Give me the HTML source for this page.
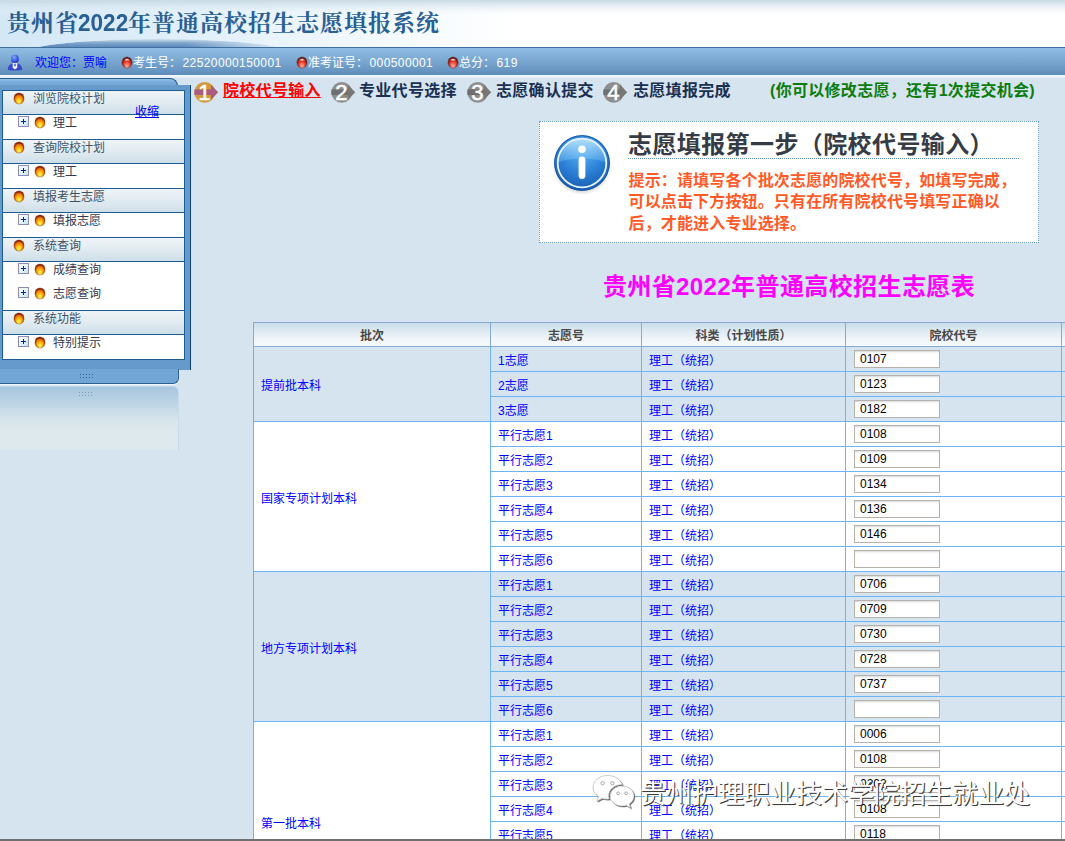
<!DOCTYPE html>
<html lang="zh-CN">
<head>
<meta charset="utf-8">
<title>贵州省2022年普通高校招生志愿填报系统</title>
<style>
*{box-sizing:border-box;margin:0;padding:0}
html,body{width:1065px;height:841px;overflow:hidden}
body{position:relative;background:#d6e4f0;font-family:"Liberation Sans","Noto Sans CJK SC",sans-serif;font-size:12px;color:#333}
.abs{position:absolute}
/* header */
#hdr{left:0;top:0;width:1065px;height:47px;background:linear-gradient(to bottom,rgba(198,217,228,.95) 0,rgba(214,229,238,.6) 6px,rgba(240,246,250,.25) 12px,rgba(255,255,255,0) 16px),linear-gradient(to right,#d3e7f5 0,#e0effa 180px,#f3f9fd 380px,#fff 520px);overflow:hidden}
#hdr .arc{position:absolute;left:22px;top:38.500px;width:272px;height:30px;border-radius:50%;background:linear-gradient(to bottom,#d3e0eb 0,#b3c9de 1.500px,#86aace 3.500px,#6b95c3 6px,#5a88b8 9px);-webkit-mask-image:linear-gradient(to right,#000 0,#000 60%,rgba(0,0,0,.25) 88%,transparent 100%);mask-image:linear-gradient(to right,#000 0,#000 60%,rgba(0,0,0,.25) 88%,transparent 100%)}
#title{left:7px;top:5px;height:36px;line-height:36px;font-family:"Liberation Serif","Noto Serif CJK SC",serif;font-weight:700;font-size:23px;letter-spacing:1px;color:#2a5f94;white-space:nowrap}
#title .d{display:inline-block;width:50px;font-family:"Liberation Sans",sans-serif;font-weight:bold;font-size:23.5px;letter-spacing:0;transform:scaleX(.96);transform-origin:0 50%;margin-left:-1px}
/* blue bar */
#bar{left:0;top:47px;width:1065px;height:28px;border-top:1px solid #3f6f9f;background:linear-gradient(to bottom,#8dbbe2 0,#7eabd4 40%,#5f8dba 100%)}
#strip{left:0;top:75px;width:1065px;height:3px;background:linear-gradient(to bottom,#f4f8fb,#e3edf5)}
#bar span{position:absolute;top:8px;line-height:14px;height:14px;font-size:12px;white-space:nowrap}
.rb{position:absolute;width:10px;height:11px;border-radius:50%;background:radial-gradient(3.500px 1.600px at 50% 24%,rgba(255,255,255,.95) 0,rgba(255,255,255,0) 100%),radial-gradient(7px 8.500px at 50% 85%,#ffb4aa 0,#f87868 28%,#e23a2a 58%,#cc2818 78%,#a41c10 100%);box-shadow:inset 0 1.300px 1.100px rgba(55,14,10,.9),inset 1px 0 1px rgba(110,20,14,.6),inset -1px 0 1px rgba(110,20,14,.6),0 0 0 .5px rgba(90,30,20,.5)}
.w{color:#fff}
#bar em{font-style:normal;letter-spacing:.4px;margin-left:1.500px}

/* sidebar */
#tabt{left:-2px;top:78px;width:180px;height:14px;border:1px solid #2a5a8a;border-bottom:0;border-radius:0 8px 0 0;background:linear-gradient(to bottom,#92c3ea 0,#78aad9 3px,#6b9fd0 100%)}
#panel{left:0;top:85px;width:191px;height:285px;background:#6699cc;border-right:1px solid #0c4478}
#tabb{left:-2px;top:369px;width:181px;height:15px;border:1px solid #2f6094;border-top:0;border-radius:0 0 6px 0;background:#72a6d6;box-shadow:0 1px 0 #f2f7fb}
#refl{left:-2px;top:386px;width:181px;height:64px;border-radius:0 6px 0 0;border-top:1px solid #c3d6e6;border-right:1px solid #c9dbe8;background:linear-gradient(to bottom,#a6c6df 0,#b9d2e4 14px,#d3e2ea 30px,#dde8ed 40px,#dee9ee 100%)}
.grip{position:absolute;left:79px;width:17px;height:5px;background-image:radial-gradient(circle,#2d5f91 0,#2d5f91 .55px,transparent .8px);background-size:3px 3px}
#menu{left:2px;top:90px;width:183px;height:270px;border:1px solid #1c5c94;background:#fff}
#menu .h{height:24px;border-bottom:1px solid #1c5c94;background:linear-gradient(to bottom,#eff4f7 0,#e4edf2 40%,#cfdfe8 100%);position:relative;color:#3e5266}
#menu .h+.i{}
#menu .i{height:24px;position:relative;color:#333a50;background:#fff}
#menu .i.sep{height:25px;border-bottom:1px solid #1c5c94}
#menu .h span{position:absolute;left:30px;top:1px;line-height:15px}
#menu .i span{position:absolute;left:50px;top:1px;line-height:15px}
.ob{position:absolute;width:10px;height:11px;border-radius:50%;background:radial-gradient(7px 8.500px at 50% 82%,#ffff6a 0,#ffd428 28%,#ff9c08 55%,#ee7a08 75%,#c85010 100%);box-shadow:inset 0 1.400px 1.200px rgba(125,30,12,.95),inset 1px 0 1px rgba(150,50,14,.6),inset -1px 0 1px rgba(150,50,14,.6),0 0 0 .5px rgba(130,50,20,.45)}
.pl{position:absolute;left:15px;top:1px;width:11px;height:11px;border:1px solid #8c8cba;background:linear-gradient(135deg,#fff 0,#e8f4fa 45%,#bfe3f2 100%)}
.pl:before{content:"";position:absolute;left:2px;top:4px;width:5px;height:1px;background:#0028a0}
.pl:after{content:"";position:absolute;left:4px;top:2px;width:1px;height:5px;background:#0028a0}
#shrink{left:135px;top:105px;line-height:15px;color:#0000ff;text-decoration:underline}
/* steps */
.st{position:absolute;top:81px;letter-spacing:.3px;height:20px;line-height:20px;font-size:16px;font-weight:bold;color:#1a3050;white-space:nowrap}
.st.on{color:#ff0000;text-decoration:underline}
.sic{position:absolute;top:81px}
#green{left:770px;top:81px;height:20px;line-height:20px;font-size:16px;font-weight:bold;color:#0c7c0c;white-space:nowrap;letter-spacing:.3px}

/* info box */
#info{left:539px;top:121px;width:500px;height:122px;background:#fff;border:1px dotted #6a9ccc}
#info h1{position:absolute;left:88px;top:7px;width:391px;letter-spacing:.4px;height:30px;line-height:31px;font-size:24px;font-weight:bold;color:#353c46;white-space:nowrap;border-bottom:1px dotted #5a8cc4}
#info p{position:absolute;left:88.500px;top:48px;width:396px;letter-spacing:.15px;font-size:16px;line-height:21.300px;font-weight:bold;color:#ff5a28;white-space:nowrap}
#big{left:513px;top:270px;letter-spacing:.4px;width:552px;height:34px;line-height:34px;text-align:center;font-size:24px;font-weight:bold;color:#ff00ff;white-space:nowrap}
/* table */
#tb{left:253px;top:322px;border-collapse:separate;border-spacing:0;table-layout:fixed;width:1073px;font-size:12px;border-left:1px solid #84abd0;border-top:1px solid #84abd0}
#tb th{height:24px;border-right:1px solid #84abd0;border-bottom:1px solid #84abd0;background:linear-gradient(to bottom,#c9ddea 0,#dbe8f1 30%,#f0f5f9 70%,#f5f9fb 100%);color:#484848;font-weight:bold;text-align:center;padding:4px 0 0 0;line-height:19px}
#tb td{height:25px;border-right:1px solid #6bb5f5;border-bottom:1px solid #6bb5f5;padding:4px 0 0 7px;color:#0000ff;line-height:20px;text-align:left;vertical-align:middle}
#tb tr.a td{background:#d6e4f0}
#tb tr.b td{background:#fff}
#tb tr.first td{height:25px}
#tb .in{display:block;margin:-4px 0 0 1px;width:86px;height:18px;border:1px solid #b9b2aa;background:#fff;box-shadow:inset 0 2px 2px -1px rgba(120,140,160,.35);color:#000;font-size:12px;line-height:16px;padding-left:5px;font-family:"Liberation Sans",sans-serif}

#wm{left:640px;top:776px;height:36px;line-height:36px;font-size:26px;font-weight:400;color:#fff;white-space:nowrap;text-shadow:1px 1px 0 #3c3c3c,1px 1px 1px rgba(40,40,40,.4);font-family:"Liberation Sans","Noto Sans CJK SC",sans-serif}
#wx{left:590px;top:772px}
#btm{left:0;top:839px;width:1065px;height:2px;background:#707070}
</style>
</head>
<body>
<div id="hdr" class="abs"><div class="arc"></div></div>
<div id="title" class="abs">贵州省<span class="d">2022</span>年普通高校招生志愿填报系统</div>
<div id="bar" class="abs">
  <svg class="abs" style="left:7px;top:6px" width="16" height="17" viewBox="0 0 16 17"><defs><radialGradient id="ug" cx="40%" cy="30%" r="70%"><stop offset="0" stop-color="#86a8f4"/><stop offset=".6" stop-color="#3e5fe0"/><stop offset="1" stop-color="#2a3cc0"/></radialGradient></defs><path d="M0.800 16 C0.800 11 4 9.300 8 9.300 S15.200 11 15.200 16 Q8 17.200 0.800 16 Z" fill="#3648cc"/><path d="M5.600 9 L5.800 13.500 Q8 16.800 10.200 13.500 L10.400 9 Z" fill="#f4f4fa"/><path d="M6.600 10.200 L9.400 10.200 L8.600 11.200 L9 12.200 L7 12.200 L7.400 11.200 Z" fill="#2a5ad8"/><ellipse cx="8" cy="5" rx="3.900" ry="4.300" fill="url(#ug)"/></svg>
  <span style="left:35px;color:#0000ff">欢迎您：贾喻</span>
  <i class="rb" style="left:122px;top:9px"></i><span class="w" style="left:133px">考生号：<em>22520000150001</em></span>
  <i class="rb" style="left:297px;top:9px"></i><span class="w" style="left:308px">准考证号：<em>000500001</em></span>
  <i class="rb" style="left:448px;top:9px"></i><span class="w" style="left:459px">总分：<em>619</em></span>
</div>
<div id="strip" class="abs"></div>

<div id="tabt" class="abs"></div>
<div id="panel" class="abs"></div>
<div id="tabb" class="abs"><i class="grip" style="left:80px;top:4px;width:16px"></i></div>
<div id="refl" class="abs"><i class="grip" style="left:80px;top:4px;width:16px;opacity:.45"></i></div>
<div id="menu" class="abs"><div class="h"><i class="ob" style="left:11px;top:2px"></i><span>浏览院校计划</span></div><div class="i sep"><i class="pl"></i><i class="ob" style="left:32px;top:2px"></i><span>理工</span></div><div class="h"><i class="ob" style="left:11px;top:2px"></i><span>查询院校计划</span></div><div class="i sep"><i class="pl"></i><i class="ob" style="left:32px;top:2px"></i><span>理工</span></div><div class="h"><i class="ob" style="left:11px;top:2px"></i><span>填报考生志愿</span></div><div class="i sep"><i class="pl"></i><i class="ob" style="left:32px;top:2px"></i><span>填报志愿</span></div><div class="h"><i class="ob" style="left:11px;top:2px"></i><span>系统查询</span></div><div class="i"><i class="pl"></i><i class="ob" style="left:32px;top:2px"></i><span>成绩查询</span></div><div class="i sep"><i class="pl"></i><i class="ob" style="left:32px;top:2px"></i><span>志愿查询</span></div><div class="h"><i class="ob" style="left:11px;top:2px"></i><span>系统功能</span></div><div class="i"><i class="pl"></i><i class="ob" style="left:32px;top:2px"></i><span>特别提示</span></div></div>
<a id="shrink" class="abs">收缩</a>
<svg class="sic" style="left:194px" width="26" height="23" viewBox="0 0 26 23"><circle cx="10.700" cy="11.300" r="10.400" fill="#d29a3c"/><path d="M0.400 8.400 H17 V14 H0.400 Z" fill="#a85c7e"/><path d="M17 3.700 L24.200 11.300 L17 18.800 Z" fill="#a85c7e"/><text x="10.400" y="18.900" text-anchor="middle" style="font-family:'Liberation Sans',sans-serif" font-size="22" fill="#fff" stroke="#fff" stroke-width=".5">1</text></svg><div class="st on" style="left:223px">院校代号输入</div><svg class="sic" style="left:331px" width="26" height="23" viewBox="0 0 26 23"><circle cx="10.700" cy="11.300" r="10.400" fill="#8e8e8e"/><path d="M0.400 8.400 H17 V14 H0.400 Z" fill="#6f6f6f"/><path d="M17 3.700 L24.200 11.300 L17 18.800 Z" fill="#777"/><text x="10.400" y="18.900" text-anchor="middle" style="font-family:'Liberation Sans',sans-serif" font-size="22" fill="#fff" stroke="#fff" stroke-width=".5">2</text></svg><div class="st" style="left:359px">专业代号选择</div><svg class="sic" style="left:467px" width="26" height="23" viewBox="0 0 26 23"><circle cx="10.700" cy="11.300" r="10.400" fill="#8e8e8e"/><path d="M0.400 8.400 H17 V14 H0.400 Z" fill="#6f6f6f"/><path d="M17 3.700 L24.200 11.300 L17 18.800 Z" fill="#777"/><text x="10.400" y="18.900" text-anchor="middle" style="font-family:'Liberation Sans',sans-serif" font-size="22" fill="#fff" stroke="#fff" stroke-width=".5">3</text></svg><div class="st" style="left:496px">志愿确认提交</div><svg class="sic" style="left:603px" width="26" height="23" viewBox="0 0 26 23"><circle cx="10.700" cy="11.300" r="10.400" fill="#8e8e8e"/><path d="M0.400 8.400 H17 V14 H0.400 Z" fill="#6f6f6f"/><path d="M17 3.700 L24.200 11.300 L17 18.800 Z" fill="#777"/><text x="10.400" y="18.900" text-anchor="middle" style="font-family:'Liberation Sans',sans-serif" font-size="22" fill="#fff" stroke="#fff" stroke-width=".5">4</text></svg><div class="st" style="left:633px">志愿填报完成</div>
<div id="green" class="abs">(你可以修改志愿，还有1次提交机会)</div>

<div id="info" class="abs">
<svg class="abs" style="left:12px;top:10.500px" width="60" height="62" viewBox="0 0 60 62">
<defs>
<radialGradient id="ig1" cx="50%" cy="28%" r="75%"><stop offset="0" stop-color="#5fb4f4"/><stop offset=".55" stop-color="#2a7fd6"/><stop offset="1" stop-color="#1858aa"/></radialGradient>
<linearGradient id="ig2" x1="0" y1="0" x2="0" y2="1"><stop offset="0" stop-color="#bfe6ff" stop-opacity=".95"/><stop offset="1" stop-color="#6fbaf2" stop-opacity=".35"/></linearGradient>
<radialGradient id="ig3" cx="50%" cy="50%" r="50%"><stop offset=".7" stop-color="#000" stop-opacity=".28"/><stop offset="1" stop-color="#000" stop-opacity="0"/></radialGradient>
</defs>
<ellipse cx="30" cy="32" rx="30" ry="30" fill="url(#ig3)"/>
<circle cx="30" cy="30" r="27.800" fill="url(#ig1)"/>
<circle cx="30" cy="30" r="27.300" fill="none" stroke="#1a56a4" stroke-width="1"/>
<path d="M5.200 30 A24.800 24.800 0 0 1 54.800 30 C42 24 18 24 5.200 30 Z" fill="url(#ig2)"/>
<circle cx="30" cy="30" r="24.300" fill="none" stroke="#e4f2fd" stroke-width="1.800"/>
<circle cx="30" cy="16.200" r="3.800" fill="#fff"/>
<rect x="26.600" y="23.500" width="6.800" height="22.500" rx="3.400" fill="#fff"/>
</svg>
<h1>志愿填报第一步（院校代号输入）</h1>
<p>提示：请填写各个批次志愿的院校代号，如填写完成，<br>可以点击下方按钮。只有在所有院校代号填写正确以<br>后，才能进入专业选择。</p>
</div>
<div id="big" class="abs">贵州省2022年普通高校招生志愿表</div>
<table id="tb" class="abs"><colgroup><col style="width:237px"><col style="width:151px"><col style="width:204px"><col style="width:216px"><col></colgroup>
<tr><th>批次</th><th>志愿号</th><th>科类（计划性质）</th><th>院校代号</th><th>专业</th></tr>
<tr class="a"><td rowspan="3">提前批本科</td><td>1志愿</td><td>理工（统招）</td><td><span class="in">0107</span></td><td></td></tr>
<tr class="a"><td>2志愿</td><td>理工（统招）</td><td><span class="in">0123</span></td><td></td></tr>
<tr class="a"><td>3志愿</td><td>理工（统招）</td><td><span class="in">0182</span></td><td></td></tr>
<tr class="b"><td rowspan="6">国家专项计划本科</td><td>平行志愿1</td><td>理工（统招）</td><td><span class="in">0108</span></td><td></td></tr>
<tr class="b"><td>平行志愿2</td><td>理工（统招）</td><td><span class="in">0109</span></td><td></td></tr>
<tr class="b"><td>平行志愿3</td><td>理工（统招）</td><td><span class="in">0134</span></td><td></td></tr>
<tr class="b"><td>平行志愿4</td><td>理工（统招）</td><td><span class="in">0136</span></td><td></td></tr>
<tr class="b"><td>平行志愿5</td><td>理工（统招）</td><td><span class="in">0146</span></td><td></td></tr>
<tr class="b"><td>平行志愿6</td><td>理工（统招）</td><td><span class="in"></span></td><td></td></tr>
<tr class="a"><td rowspan="6">地方专项计划本科</td><td>平行志愿1</td><td>理工（统招）</td><td><span class="in">0706</span></td><td></td></tr>
<tr class="a"><td>平行志愿2</td><td>理工（统招）</td><td><span class="in">0709</span></td><td></td></tr>
<tr class="a"><td>平行志愿3</td><td>理工（统招）</td><td><span class="in">0730</span></td><td></td></tr>
<tr class="a"><td>平行志愿4</td><td>理工（统招）</td><td><span class="in">0728</span></td><td></td></tr>
<tr class="a"><td>平行志愿5</td><td>理工（统招）</td><td><span class="in">0737</span></td><td></td></tr>
<tr class="a"><td>平行志愿6</td><td>理工（统招）</td><td><span class="in"></span></td><td></td></tr>
<tr class="b"><td rowspan="8">第一批本科</td><td>平行志愿1</td><td>理工（统招）</td><td><span class="in">0006</span></td><td></td></tr>
<tr class="b"><td>平行志愿2</td><td>理工（统招）</td><td><span class="in">0108</span></td><td></td></tr>
<tr class="b"><td>平行志愿3</td><td>理工（统招）</td><td><span class="in">0202</span></td><td></td></tr>
<tr class="b"><td>平行志愿4</td><td>理工（统招）</td><td><span class="in">0108</span></td><td></td></tr>
<tr class="b"><td>平行志愿5</td><td>理工（统招）</td><td><span class="in">0118</span></td><td></td></tr>
<tr class="b"><td>平行志愿6</td><td>理工（统招）</td><td><span class="in"></span></td><td></td></tr>
<tr class="b"><td>平行志愿7</td><td>理工（统招）</td><td><span class="in"></span></td><td></td></tr>
<tr class="b"><td>平行志愿8</td><td>理工（统招）</td><td><span class="in"></span></td><td></td></tr>
</table>
<svg id="wx" class="abs" width="48" height="42" viewBox="0 0 48 42">
<defs><filter id="wsh" x="-10%" y="-10%" width="130%" height="130%"><feDropShadow dx="1" dy="1" stdDeviation=".5" flood-color="#333" flood-opacity=".75"/></filter></defs>
<g filter="url(#wsh)" fill="#fff" stroke="#8a8a8a" stroke-width=".45">
<path d="M17.500 3.500 C9.500 3.500 3 8.800 3 15.400 C3 19.100 5.100 22.400 8.400 24.600 L6.800 29.200 L12.300 26.400 C13.900 26.900 15.700 27.200 17.500 27.200 C18.100 27.200 18.700 27.200 19.300 27.100 C18.900 26 18.700 24.900 18.700 23.700 C18.700 17.600 24.600 12.700 31.800 12.700 C32 12.700 32.200 12.700 32.400 12.700 C30.700 7.400 24.700 3.500 17.500 3.500 Z"/>
<path d="M44 24 C44 18.500 38.700 14 32.100 14 C25.500 14 20.200 18.500 20.200 24 C20.200 29.500 25.500 34 32.100 34 C33.500 34 34.900 33.800 36.200 33.400 L40.600 35.800 L39.400 31.900 C42.200 30.100 44 27.200 44 24 Z"/>
</g>
<g fill="#fff" stroke="#777" stroke-width=".6"><circle cx="12.600" cy="11.200" r="1.700"/><circle cx="22.300" cy="11.200" r="1.700"/><circle cx="28.100" cy="21.300" r="1.400"/><circle cx="36.100" cy="21.300" r="1.400"/></g>
</svg>
<div id="wm" class="abs">贵州护理职业技术学院招生就业处</div>
<div id="btm" class="abs"></div>
</body>
</html>
